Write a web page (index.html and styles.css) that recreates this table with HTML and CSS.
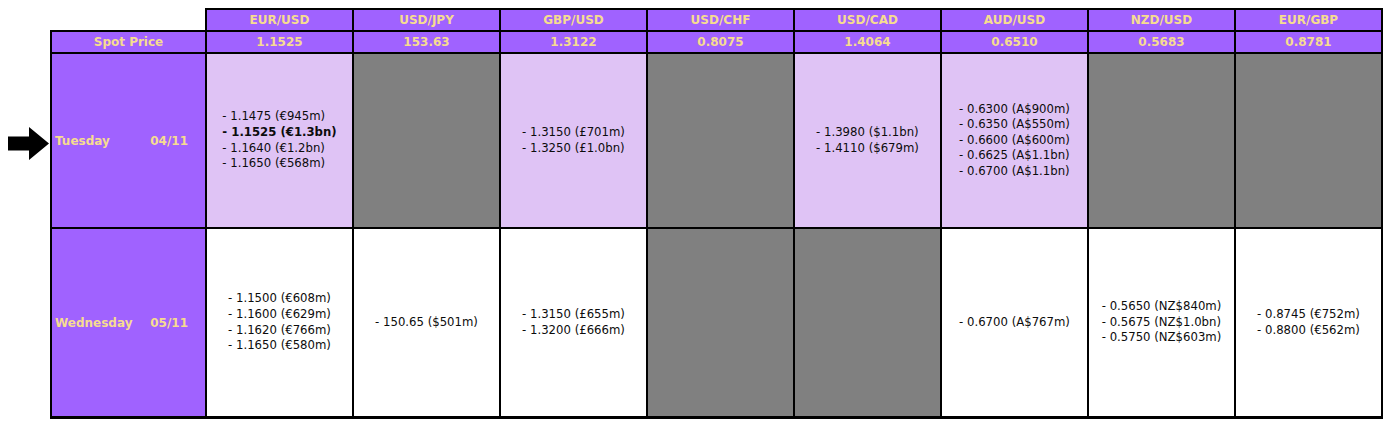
FILE: index.html
```html
<!DOCTYPE html>
<html lang="en">
<head>
<meta charset="utf-8">
<title>FX Option Expiries</title>
<link rel="stylesheet" href="styles.css">
</head>
<body>
<table class="expiries">
  <colgroup>
    <col class="col-label">
    <col class="col-pair"><col class="col-pair"><col class="col-pair"><col class="col-pair">
    <col class="col-pair"><col class="col-pair"><col class="col-pair"><col class="col-pair">
  </colgroup>
  <thead>
    <tr class="row-pairs">
      <th class="corner"></th>
      <th>EUR/USD</th><th>USD/JPY</th><th>GBP/USD</th><th>USD/CHF</th>
      <th>USD/CAD</th><th>AUD/USD</th><th>NZD/USD</th><th>EUR/GBP</th>
    </tr>
    <tr class="row-spot">
      <th>Spot Price</th>
      <th>1.1525</th><th>153.63</th><th>1.3122</th><th>0.8075</th>
      <th>1.4064</th><th>0.6510</th><th>0.5683</th><th>0.8781</th>
    </tr>
  </thead>
  <tbody>
    <tr class="row-day row-today">
      <th class="day">
        <svg class="pointer" width="41" height="33" viewBox="0 0 41 33" aria-hidden="true"><path d="M0 9.5H21V0L41 16.5L21 33V23.5H0Z" fill="#000"/></svg>
        <span class="day-inner"><span>Tuesday</span><span>04/11</span></span>
      </th>
      <td class="hl"><div class="list">
        <div>- 1.1475 (€945m)</div>
        <div class="strong">- 1.1525 (€1.3bn)</div>
        <div>- 1.1640 (€1.2bn)</div>
        <div>- 1.1650 (€568m)</div>
      </div></td>
      <td class="empty"></td>
      <td class="hl"><div class="list">
        <div>- 1.3150 (£701m)</div>
        <div>- 1.3250 (£1.0bn)</div>
      </div></td>
      <td class="empty"></td>
      <td class="hl"><div class="list">
        <div>- 1.3980 ($1.1bn)</div>
        <div>- 1.4110 ($679m)</div>
      </div></td>
      <td class="hl"><div class="list">
        <div>- 0.6300 (A$900m)</div>
        <div>- 0.6350 (A$550m)</div>
        <div>- 0.6600 (A$600m)</div>
        <div>- 0.6625 (A$1.1bn)</div>
        <div>- 0.6700 (A$1.1bn)</div>
      </div></td>
      <td class="empty"></td>
      <td class="empty"></td>
    </tr>
    <tr class="row-day row-next">
      <th class="day">
        <span class="day-inner"><span>Wednesday</span><span>05/11</span></span>
      </th>
      <td><div class="list">
        <div>- 1.1500 (€608m)</div>
        <div>- 1.1600 (€629m)</div>
        <div>- 1.1620 (€766m)</div>
        <div>- 1.1650 (€580m)</div>
      </div></td>
      <td><div class="list">
        <div>- 150.65 ($501m)</div>
      </div></td>
      <td><div class="list">
        <div>- 1.3150 (£655m)</div>
        <div>- 1.3200 (£666m)</div>
      </div></td>
      <td class="empty"></td>
      <td class="empty"></td>
      <td><div class="list">
        <div>- 0.6700 (A$767m)</div>
      </div></td>
      <td><div class="list">
        <div>- 0.5650 (NZ$840m)</div>
        <div>- 0.5675 (NZ$1.0bn)</div>
        <div>- 0.5750 (NZ$603m)</div>
      </div></td>
      <td><div class="list">
        <div>- 0.8745 (€752m)</div>
        <div>- 0.8800 (€562m)</div>
      </div></td>
    </tr>
  </tbody>
</table>
</body>
</html>
```

FILE: styles.css
```css
html, body {
  margin: 0;
  padding: 0;
  background: #ffffff;
}

body {
  padding: 8px 0 0 50px;
  font-family: "DejaVu Sans", Verdana, sans-serif;
}

.expiries {
  border-collapse: collapse;
  table-layout: fixed;
  width: 1332px;
}

.col-label { width: 155px; }
.col-pair { width: 147px; }

.expiries th,
.expiries td {
  border: 2px solid #000;
  padding: 0;
}

.expiries th {
  background: #a062ff;
  color: #f6dc90;
  font-weight: bold;
  font-size: 12px;
  text-align: center;
  vertical-align: middle;
}

.row-pairs th,
.row-spot th {
  height: 20px;
  line-height: 14px;
}

.expiries th.corner {
  background: transparent;
  border-top: none;
  border-left: none;
}

.row-today th,
.row-today td { height: 173px; }

.row-next th,
.row-next td { height: 187px; }

.row-next td,
.row-next th { border-bottom-width: 3px; }

th.day {
  position: relative;
  text-align: left;
}

.day-inner {
  display: flex;
  justify-content: space-between;
  padding: 0 17px 0 3px;
}

.pointer {
  position: absolute;
  left: -44px;
  top: 73px;
}

.expiries td {
  background: #ffffff;
  text-align: center;
  vertical-align: middle;
  font-size: 11.7px;
  color: #0c0c0c;
}

.expiries td.hl { background: #dfc3f5; }
.expiries td.empty { background: #808080; }

.list {
  display: inline-block;
  text-align: left;
  line-height: 15.6px;
  white-space: nowrap;
}

.strong { font-weight: bold; }
```
